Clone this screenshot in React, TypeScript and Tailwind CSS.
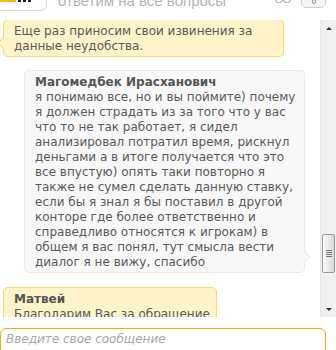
import React from 'react';

const font = { fontFamily: '"DejaVu Sans", Verdana, sans-serif' };

const longText = [
  'я понимаю все, но и вы поймите) почему',
  'я должен страдать из за того что у вас',
  'что то не так работает, я сидел',
  'анализировал потратил время, рискнул',
  'деньгами а в итоге получается что это',
  'все впустую) опять таки повторно я',
  'также не сумел сделать данную ставку,',
  'если бы я знал я бы поставил в другой',
  'конторе где более ответственно и',
  'справедливо относятся к игрокам) в',
  'общем я вас понял, тут смысла вести',
  'диалог я не вижу, спасибо',
];

const Lines: React.FC<{ lines: string[] }> = ({ lines }) => (
  <>
    {lines.map((l) => (
      <div key={l} className="whitespace-nowrap">{l}</div>
    ))}
  </>
);

const Scrollbar: React.FC = () => (
  <div className="w-[16px] h-full bg-[#f0f0f0] border-l border-[#e6e6e6] flex flex-col items-center">
    <div className="h-[16px] flex items-center justify-center">
      <div className="w-0 h-0 border-l-[3px] border-r-[3px] border-b-[3px] border-l-transparent border-r-transparent border-b-[#333]" />
    </div>
    <div className="flex-1 w-full px-[1px] flex flex-col">
      <div className="flex-1" />
      <div className="h-[39px] w-full rounded-[2px] border border-[#9a9a9a] bg-gradient-to-r from-[#fafafa] to-[#d9d9d9] flex flex-col items-center justify-center gap-[1px]">
        <div className="w-[6px] h-[1px] bg-[#777]" />
        <div className="w-[6px] h-[1px] bg-[#777]" />
        <div className="w-[6px] h-[1px] bg-[#777]" />
        <div className="w-[6px] h-[1px] bg-[#777]" />
      </div>
      <div className="h-[28px]" />
    </div>
    <div className="h-[16px] flex items-center justify-center">
      <div className="w-0 h-0 border-l-[3px] border-r-[3px] border-t-[3px] border-l-transparent border-r-transparent border-t-[#333]" />
    </div>
  </div>
);

export default function App() {
  return (
    <div className="w-[336px] h-[350px] overflow-hidden bg-white flex flex-col text-[12px] leading-[15px] text-[#5a5a5a]" style={font}>
      {/* header */}
      <div className="h-[20px] shrink-0 overflow-hidden flex items-start">
        <div className="w-[47px] h-[30px] shrink-0 -mt-[19px] border-r border-b border-[#d9d9d9] rounded-br-[6px] flex items-end pb-[8px] gap-[2px]">
          <div className="w-[16px] h-[6px] bg-gradient-to-r from-[#f7c21a] to-[#f4b400]" />
          <div className="w-[3px] h-[4px] bg-[#222]" />
          <div className="w-[3px] h-[4px] bg-[#222]" />
          <div className="w-[3px] h-[4px] bg-[#222]" />
        </div>
        <div
          className="ml-[11px] -mt-[7px] text-[15px] leading-[16px] text-[#b4b4b4] whitespace-nowrap"
          style={{ fontFamily: '"Liberation Sans", Arial, sans-serif' }}
        >
          ответим на все вопросы
        </div>
        <div className="flex-1" />
        <svg width="16" height="12" viewBox="0 0 16 12" className="shrink-0 -mt-[9px] mr-[10px]" fill="none" stroke="#9a9a9a" strokeWidth="1">
          <rect x="0.5" y="0.5" width="7" height="11" rx="3" />
          <rect x="8.5" y="0.5" width="7" height="11" rx="3" />
        </svg>
        <div className="w-[25px] h-[20px] shrink-0 -mt-[12px] mr-[10px] border border-[#cfcfcf] rounded-[5px] bg-[#f5f5f5] flex items-end justify-center pb-[3px]">
          <div className="w-[4px] h-[5px] border border-[#999] rounded-[2px]" />
        </div>
      </div>

      {/* chat */}
      <div className="h-[297px] shrink-0 flex">
        <div className="flex-1 overflow-hidden">
          <div className="-mt-[1px] flex flex-col items-start">
            <div className="relative ml-[3px] w-[281px] bg-[#fff3c9] border border-[#f6d778] rounded-[5px] pl-[10px] pt-[4px] pb-[2px]">
              <Lines lines={['Еще раз приносим свои извинения за', 'данные неудобства.']} />
              <div className="absolute -left-[5px] bottom-[9px] w-[8px] h-[8px] rotate-45 bg-[#fff3c9] border-l border-b border-[#f6d778]" />
            </div>

            <div className="relative mt-[13px] ml-[24px] w-[281px] bg-[#f8f8f8] border border-[#eaeaea] rounded-[5px] pl-[10px] pt-[4px] pb-[2px]">
              <div className="font-bold text-[#555] whitespace-nowrap">Магомедбек Ирасханович</div>
              <Lines lines={longText} />
              <div className="absolute -right-[5px] bottom-[11px] w-[8px] h-[8px] rotate-45 bg-[#f8f8f8] border-r border-t border-[#eaeaea]" />
            </div>

            <div className="relative mt-[14px] ml-[3px] w-[214px] h-[40px] bg-[#fff3c9] border border-[#f6d778] rounded-[5px] pl-[10px] pt-[4px]">
              <div className="font-bold text-[#555] whitespace-nowrap">Матвей</div>
              <Lines lines={['Благодарим Вас за обращение']} />
            </div>
          </div>
        </div>
        <Scrollbar />
      </div>

      {/* input */}
      <div className="flex-1 min-h-0 overflow-hidden pt-[11px] pr-[10px]">
        <div className="h-[34px] border border-[#e6b311] rounded-[6px] pl-[5px] pt-[3px] italic text-[#a8a8a8] whitespace-nowrap">
          Введите свое сообщение
        </div>
      </div>
    </div>
  );
}
